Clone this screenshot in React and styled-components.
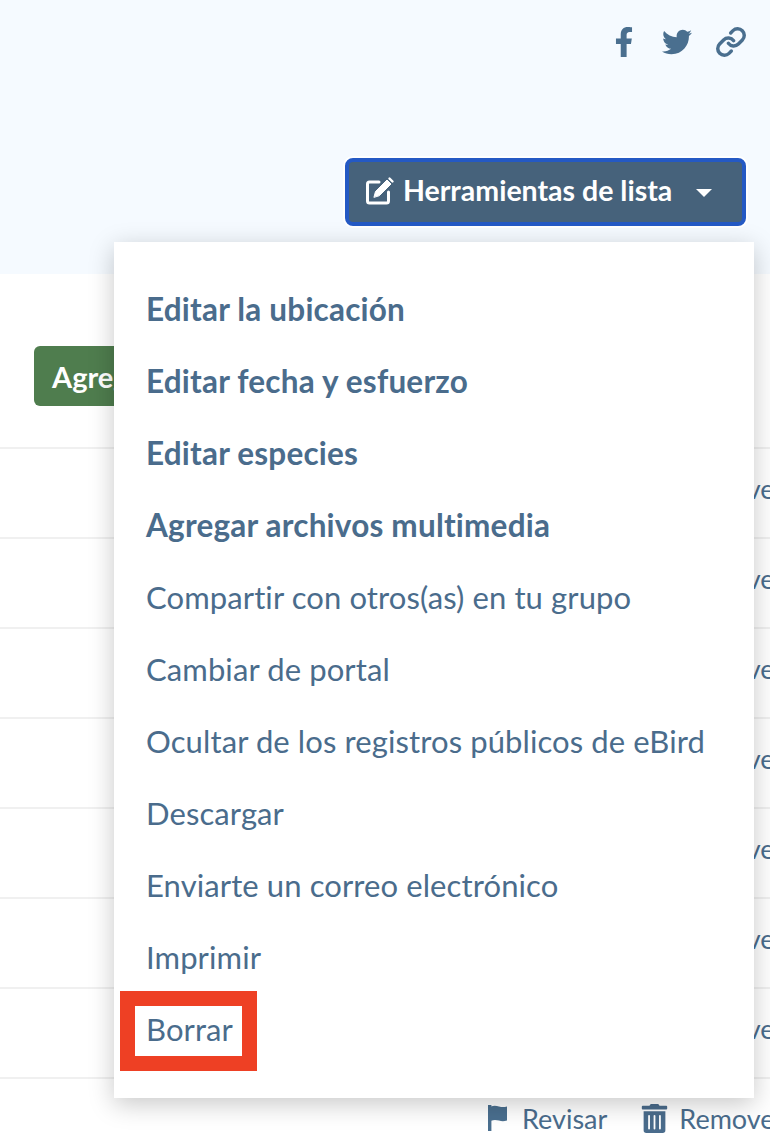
import React from "react";
import styled, { createGlobalStyle } from "styled-components";
import { FaFacebookF, FaTwitter, FaTrashAlt } from "react-icons/fa";
import { Link } from "lucide-react";

const GlobalStyle = createGlobalStyle`
  html, body {
    margin: 0;
    padding: 0;
    background: #fff;
  }
  * {
    box-sizing: border-box;
  }
`;

const Page = styled.div`
  position: relative;
  width: 770px;
  height: 1146px;
  overflow: hidden;
  background: #fff;
  color: #4a6c8c;
  font-family: Lato, "Liberation Sans", sans-serif;
`;

const Header = styled.header`
  height: 274px;
  background: #f5faff;
  padding: 27px 24px 0 0;
  display: flex;
  flex-direction: column;
  align-items: flex-end;
`;

const ShareIcons = styled.div`
  display: flex;
  align-items: center;
  height: 30px;
  gap: 23px;
  margin-right: -1px;
  color: #4a6f8f;
  font-size: 30px;
  margin-bottom: 101px;
`;

const ToolsButton = styled.button`
  width: 401px;
  height: 68px;
  background: #46627b;
  border: 4px solid #2459c4;
  border-radius: 8px;
  box-shadow: 0 0 0 2px #fff;
  color: #fff;
  font-family: inherit;
  font-size: 28.5px;
  font-weight: 700;
  display: flex;
  align-items: center;
  padding: 0 0 5px 16px;
`;

const EditIcon = styled.svg`
  width: 30px;
  height: 30px;
  margin-right: 8px;
  margin-top: 2px;
  fill: none;
  stroke: #fff;
  stroke-linecap: round;
  stroke-linejoin: round;
`;

const Caret = styled.span`
  width: 0;
  height: 0;
  margin: 7px 0 0 24px;
  border-left: 8px solid transparent;
  border-right: 8px solid transparent;
  border-top: 8px solid #fff;
`;

const Toolbar = styled.div`
  height: 173px;
  padding: 72px 0 0 34px;
`;

const AddButton = styled.button`
  width: 300px;
  height: 60px;
  border: 0;
  border-radius: 6px;
  background: #4f7d4e;
  color: #fff;
  font-family: inherit;
  font-size: 29px;
  font-weight: 700;
  text-align: left;
  padding: 0 0 0 18px;
`;

const Row = styled.div`
  height: 90px;
  border-top: 2px solid #f0f0f0;
  display: flex;
  align-items: center;
  padding: 0 0 10px 488px;
  font-size: 27px;
  white-space: nowrap;
`;

const Action = styled.span`
  display: inline-flex;
  align-items: center;
  gap: ${(p) => p.$gap}px;
  margin-right: 33px;
  color: #4a6c8c;
`;

const TrashIcon = styled(FaTrashAlt)`
  font-size: 29px;
`;

const Menu = styled.ul`
  position: absolute;
  left: 114px;
  top: 242px;
  width: 640px;
  margin: 0;
  padding: 32px;
  list-style: none;
  background: #fff;
  box-shadow: 0 6px 24px rgba(0, 0, 0, 0.22);
`;

const MenuItem = styled.li`
  height: 72px;
  line-height: 70px;
  white-space: nowrap;
  color: #4a6c8c;
  font-size: ${(p) => (p.$bold ? 31.5 : 31)}px;
  font-weight: ${(p) => (p.$bold ? 700 : 400)};
  letter-spacing: ${(p) => (p.$bold ? 0.2 : 0.1)}px;
`;

const Highlight = styled.div`
  position: absolute;
  left: 120px;
  top: 991px;
  width: 137px;
  height: 80px;
  border: 15px solid #ee4024;
`;

const FlagIcon = () => (
  <svg width="20" height="26" viewBox="0 0 20 26" fill="#4a6f8f">
    <rect x="0" y="0" width="3.4" height="26" />
    <path d="M3 1.5c3-1.4 5.5-.8 8-.1 2.4.7 4.8 1 8 .1v14c-3.2 1-5.5.8-8 .1-2.500-.7-5-1-8 .1z" />
  </svg>
);

const menuItems = [
  { label: "Editar la ubicación", bold: true },
  { label: "Editar fecha y esfuerzo", bold: true },
  { label: "Editar especies", bold: true },
  { label: "Agregar archivos multimedia", bold: true },
  { label: "Compartir con otros(as) en tu grupo" },
  { label: "Cambiar de portal" },
  { label: "Ocultar de los registros públicos de eBird" },
  { label: "Descargar" },
  { label: "Enviarte un correo electrónico" },
  { label: "Imprimir" },
  { label: "Borrar" },
];

const rows = [0, 1, 2, 3, 4, 5, 6, 7];

export default function App() {
  return (
    <Page>
      <GlobalStyle />
      <Header>
        <ShareIcons>
          <FaFacebookF />
          <FaTwitter />
          <Link size={32} strokeWidth={2.6} />
        </ShareIcons>
        <ToolsButton>
          <EditIcon viewBox="0 0 30 30">
            <path
              d="M14 6H4.5A2 2 0 0 0 2.5 8v17a2 2 0 0 0 2 2h17a2 2 0 0 0 2-2V16"
              strokeWidth="3"
            />
            <path d="M9 21l1.5-5.5L22 4l4 4-11.5 11.5z" fill="#fff" strokeWidth="1" />
            <path d="M24.5 2.5l3 3" strokeWidth="2.4" />
          </EditIcon>
          Herramientas de lista
          <Caret />
        </ToolsButton>
      </Header>
      <Toolbar>
        <AddButton>Agregar especies</AddButton>
      </Toolbar>
      {rows.map((row) => (
        <Row key={row}>
          <Action $gap={14}>
            <FlagIcon />
            Revisar
          </Action>
          <Action $gap={10}>
            <TrashIcon />
            Remove
          </Action>
        </Row>
      ))}
      <Menu>
        {menuItems.map((item) => (
          <MenuItem key={item.label} $bold={item.bold}>
            {item.label}
          </MenuItem>
        ))}
      </Menu>
      <Highlight />
    </Page>
  );
}
